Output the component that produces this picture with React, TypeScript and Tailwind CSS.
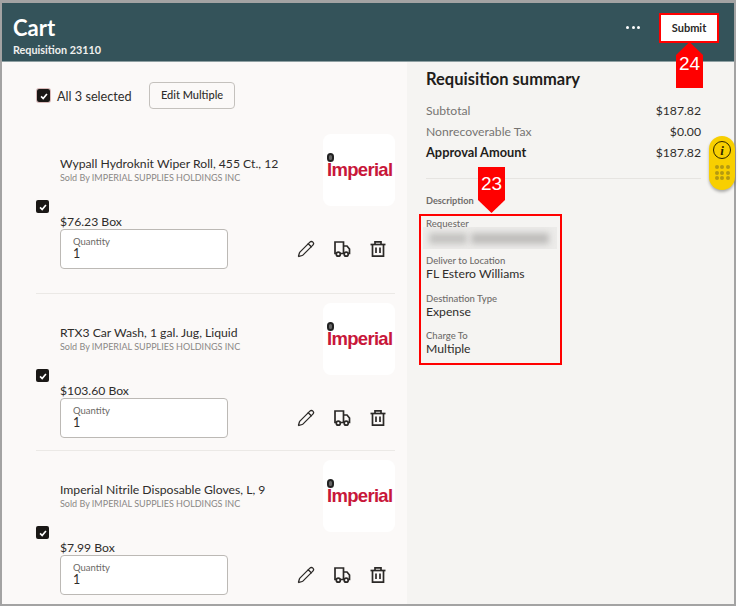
import { Pencil } from "lucide-react";

const items = [
  { name: "Wypall Hydroknit Wiper Roll, 455 Ct., 12", price: "$76.23 Box" },
  { name: "RTX3 Car Wash, 1 gal. Jug, Liquid", price: "$103.60 Box" },
  { name: "Imperial Nitrile Disposable Gloves, L, 9", price: "$7.99 Box" },
];

const details = [
  { label: "Deliver to Location", value: "FL Estero Williams" },
  { label: "Destination Type", value: "Expense" },
  { label: "Charge To", value: "Multiple" },
];

function CheckBox() {
  return (
    <span className="flex h-[13px] w-[13px] items-center justify-center rounded-[2px] bg-[#1a1816]">
      <svg viewBox="0 0 12 12" className="h-[10px] w-[10px]" fill="none" stroke="white" strokeWidth="2">
        <path d="M2.5 6.5 L5 9 L9.5 3.5" />
      </svg>
    </span>
  );
}

function TruckIcon() {
  return (
    <svg viewBox="0 0 18 18" className="h-[18px] w-[18px]" fill="none" stroke="#2b2927" strokeWidth="1.7">
      <path d="M3.2 13.5H2V2H10.5V13.5H7.5" />
      <path d="M10.5 6H14L16.5 9V13.5H15.5" />
      <circle cx="5.3" cy="14.2" r="2" />
      <circle cx="13.2" cy="14.2" r="2" />
    </svg>
  );
}

function TrashIcon() {
  return (
    <svg viewBox="0 0 18 18" className="h-[18px] w-[18px]" fill="none" stroke="#2b2927" strokeWidth="1.7">
      <path d="M1.5 4.5H16.5" />
      <path d="M6 4.5V1.8H12V4.5" />
      <path d="M3.5 4.5V16.2H14.5V4.5" />
      <path d="M7 7.5V13M11 7.5V13" />
    </svg>
  );
}

function Logo() {
  return (
    <div className="relative h-[72px] w-[72px] shrink-0 rounded-lg bg-white">
      <span className="absolute left-[4px] top-[19px] h-[9px] w-[7px] rounded-full border-2 border-[#222] bg-[#666]" />
      <span className="absolute left-[4px] top-[25px] font-['Liberation_Sans',sans-serif] text-[18.5px] font-bold leading-[22px] tracking-[-0.7px] text-[#c8173a]">
        Imperial
      </span>
    </div>
  );
}

function CartRow({ name, price, last, first }: { name: string; price: string; last?: boolean; first?: boolean }) {
  return (
    <div className={`flex ${first ? "pb-[24px]" : last ? "pt-[9px]" : "pt-[9px] pb-[12px]"} ${last ? "" : "border-b border-[#ebe9e6]"}`}>
      <div className="w-[24px] shrink-0 pt-[66px]">
        <CheckBox />
      </div>
      <div className="min-w-0 flex-1">
        <div className="flex justify-between">
          <div className="pt-[22px]">
            <div className="text-[12.2px] leading-[16px] text-[#2f2d2b]">{name}</div>
            <div className="text-[9px] leading-[11px] text-[#8a8785]">Sold By IMPERIAL SUPPLIES HOLDINGS INC</div>
          </div>
          <Logo />
        </div>
        <div className="mt-[9px] text-[12.2px] leading-[14px] text-[#2f2d2b]">{price}</div>
        <div className="flex items-end justify-between">
          <div className="h-[40px] w-[168px] rounded-[4px] border border-[#bcb9b5] bg-white pl-[12px] pt-[6px]">
            <div className="text-[9.5px] leading-[11px] text-[#6b6966]">Quantity</div>
            <div className="text-[12.5px] leading-[14px] text-[#2f2d2b]">1</div>
          </div>
          <div className="mb-[11px] mr-[8px] flex gap-[18px] text-[#2b2927]">
            <Pencil size={18} strokeWidth={1.7} />
            <TruckIcon />
            <TrashIcon />
          </div>
        </div>
      </div>
    </div>
  );
}

function Callout({ num, flip }: { num: string; flip?: boolean }) {
  return (
    <div className="relative h-[46px] w-[27px]">
      <svg viewBox="0 0 27 46" className="h-[46px] w-[27px]">
        <polygon fill="#ff0000" points={flip ? "13.5,0 27,13 27,46 0,46 0,13" : "0,0 27,0 27,33 13.5,46 0,33"} />
      </svg>
      <span className={`absolute inset-x-0 ${flip ? "top-[10px]" : "top-[5px]"} text-center font-['Liberation_Sans',sans-serif] text-[19px] leading-[24px] text-white`}>
        {num}
      </span>
    </div>
  );
}

export default function App() {
  return (
    <div className="relative h-[609px] w-[739px] overflow-hidden bg-white font-['Lato',sans-serif]">
      <div className="flex h-[606px] w-[736px] flex-col overflow-hidden border-x-2 border-b-2 border-t-[3px] border-[#a3a3a3]">
        <header className="flex h-[59px] shrink-0 items-start justify-between border-b border-[#8e9fa2] bg-[#34535a] pl-[11px] pr-[15px]">
          <div>
            <h1 className="pt-[10px] text-[22px] font-bold leading-[30px] text-white">Cart</h1>
            <div className="text-[10.8px] font-bold leading-[14px] text-[#f0f0ee]">Requisition 23110</div>
          </div>
          <div className="flex items-center gap-[19px] pt-[10px]">
            <div className="flex gap-[2.5px] pb-[2px]">
              <span className="h-[3px] w-[3px] rounded-full bg-white" />
              <span className="h-[3px] w-[3px] rounded-full bg-white" />
              <span className="h-[3px] w-[3px] rounded-full bg-white" />
            </div>
            <button className="h-[30px] w-[60px] border-2 border-[#f00] bg-white text-[11px] font-bold text-[#2b2927]">
              Submit
            </button>
          </div>
        </header>

        <div className="flex min-h-0 flex-1">
          <main className="w-[405px] shrink-0 overflow-hidden bg-[#fbf9f8] pl-[34px] pr-[12px]">
            <div className="flex h-[72px] items-start pt-[20px]">
              <div className="ml-[1px] mt-[7px] rounded-[2px] ring-1 ring-[#d8b9b9]">
                <CheckBox />
              </div>
              <span className="ml-[7px] mt-[4px] w-[74px] whitespace-nowrap text-[12.7px] leading-[20px] text-[#2f2d2b]">All 3 selected</span>
              <button className="ml-[18px] h-[27px] w-[86px] rounded-[4px] border border-[#c4c1bd] text-[11px] font-medium text-[#2f2d2b]">
                Edit Multiple
              </button>
            </div>
            {items.map((item, i) => (
              <CartRow key={item.name} name={item.name} price={item.price} first={i === 0} last={i === 2} />
            ))}
          </main>

          <aside className="min-w-0 flex-1 bg-[#f5f4f2] pl-[19px] pr-[33px]">
            <h2 className="pt-[5px] text-[16.5px] font-bold leading-[24px] text-[#1f1d1b]">Requisition summary</h2>
            <div className="mt-[9px] border-b border-[#e6e4e1] pb-[15px] text-[12.2px] leading-[21px]">
              <div className="flex justify-between text-[#2f2d2b]">
                <span className="text-[#777472]">Subtotal</span>
                <span>$187.82</span>
              </div>
              <div className="flex justify-between text-[#2f2d2b]">
                <span className="text-[#777472]">Nonrecoverable Tax</span>
                <span>$0.00</span>
              </div>
              <div className="flex justify-between text-[#2f2d2b]">
                <span className="text-[12.8px] font-bold text-[#1f1d1b]">Approval Amount</span>
                <span>$187.82</span>
              </div>
            </div>
            <div className="mt-[15px] text-[9.2px] font-bold leading-[14px] text-[#6f6c6a]">Description</div>
            <div className="mt-[9px] text-[9.6px] font-medium leading-[14px] text-[#6f6c6a]">Requester</div>
            <div className="ml-[-3px] mt-[-4px] flex h-[22px] w-[134px] items-center gap-[4px] overflow-hidden bg-[#ecebe9]">
              <span className="ml-[6px] h-[11px] w-[38px] bg-[#c4c3c1] blur-[3px]" />
              <span className="h-[11px] w-[78px] bg-[#bebdbb] blur-[3px]" />
            </div>
            <div className="mt-[5px] flex flex-col gap-[10.5px]">
              {details.map((d) => (
                <div key={d.label}>
                  <div className="text-[9.5px] font-medium leading-[13px] text-[#6f6c6a]">{d.label}</div>
                  <div className="text-[12.2px] leading-[14px] text-[#2f2d2b]">{d.value}</div>
                </div>
              ))}
            </div>
          </aside>
        </div>
      </div>

      {/* annotations on top of the page */}
      <div className="absolute left-[419px] top-[214px] h-[151px] w-[143px] border-2 border-[#f00]" />
      <div className="absolute left-[478px] top-[167px]">
        <Callout num="23" />
      </div>
      <div className="absolute left-[676px] top-[42px]">
        <Callout num="24" flip />
      </div>

      {/* floating help pill */}
      <div className="absolute left-[709px] top-[136px] flex h-[54px] w-[26px] flex-col items-center rounded-[13px] bg-[#f8cf00] pt-[5px] shadow-[0_2px_3px_rgba(0,0,0,0.3)]">
        <span className="flex h-[18px] w-[18px] items-center justify-center rounded-full border-[1.5px] border-[#2b2400] font-['Liberation_Serif',serif] text-[13px] font-bold italic leading-none text-[#2b2400]">
          i
        </span>
        <div className="mt-[6px] grid grid-cols-3 gap-[1.5px]">
          {Array.from({ length: 9 }).map((_, i) => (
            <span key={i} className="h-[4px] w-[4px] rounded-full bg-[#b59a10]" />
          ))}
        </div>
      </div>
    </div>
  );
}
